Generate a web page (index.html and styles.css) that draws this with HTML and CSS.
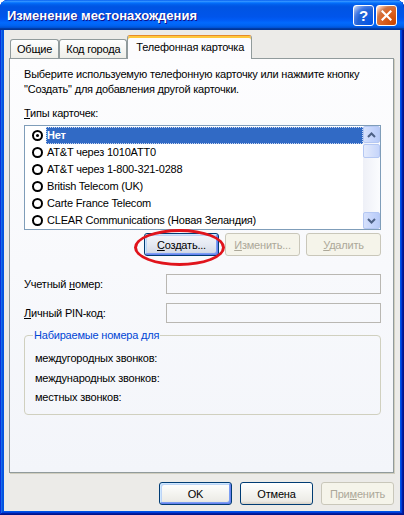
FILE: index.html
```html
<!DOCTYPE html>
<html lang="ru">
<head>
    <meta charset="UTF-8">
    <title>Изменение местонахождения</title>
    <link rel="stylesheet" href="styles.css">
</head>
<body>
    <div class="window">
        <div class="titlebar">
            <span class="title">Изменение местонахождения</span>
            <div class="controls">
                <button class="ctl help">?</button>
                <button class="ctl close">
                    <svg width="11" height="11" viewBox="0 0 11 11"><path d="M1.5 1.5 L9.5 9.5 M9.5 1.5 L1.5 9.5" stroke="#fff" stroke-width="2.2" stroke-linecap="square"/></svg>
                </button>
            </div>
        </div>

        <div class="frame">
            <div class="tabs">
                <div class="tab">Общие</div>
                <div class="tab">Код города</div>
                <div class="tab active">Телефонная карточка</div>
            </div>

            <div class="panel">
                <p class="intro">Выберите используемую телефонную карточку или нажмите кнопку "Создать" для добавления другой карточки.</p>
                <div class="caption"><u>Т</u>ипы карточек:</div>

                <div class="listbox">
                    <ul class="items">
                        <li class="item selected"><span class="radio on"></span><span class="name">Нет</span></li>
                        <li class="item"><span class="radio"></span><span class="name">AT&amp;T через 1010ATT0</span></li>
                        <li class="item"><span class="radio"></span><span class="name">AT&amp;T через 1-800-321-0288</span></li>
                        <li class="item"><span class="radio"></span><span class="name">British Telecom (UK)</span></li>
                        <li class="item"><span class="radio"></span><span class="name">Carte France Telecom</span></li>
                        <li class="item"><span class="radio"></span><span class="name">CLEAR Communications (Новая Зеландия)</span></li>
                    </ul>
                    <div class="scrollbar">
                        <div class="sb-btn">
                            <svg width="9" height="6" viewBox="0 0 9 6"><path d="M1 5 L4.5 1.5 L8 5" fill="none" stroke="#4D6185" stroke-width="2"/></svg>
                        </div>
                        <div class="sb-thumb"></div>
                        <div class="sb-track"></div>
                        <div class="sb-btn">
                            <svg width="9" height="6" viewBox="0 0 9 6"><path d="M1 1 L4.5 4.5 L8 1" fill="none" stroke="#4D6185" stroke-width="2"/></svg>
                        </div>
                    </div>
                </div>

                <div class="btn-row">
                    <button class="btn focus"><u>С</u>оздать...</button>
                    <button class="btn" disabled><u>И</u>зменить...</button>
                    <button class="btn" disabled><u>У</u>далить</button>
                </div>

                <div class="field first">
                    <label>Учетный <u>н</u>омер:</label>
                    <div class="edit"></div>
                </div>
                <div class="field">
                    <label><u>Л</u>ичный PIN-код:</label>
                    <div class="edit"></div>
                </div>

                <fieldset class="group">
                    <legend>Набираемые номера для</legend>
                    <div class="line">междугородных звонков:</div>
                    <div class="line">международных звонков:</div>
                    <div class="line">местных звонков:</div>
                </fieldset>
            </div>

            <div class="footer">
                <button class="btn small default">OK</button>
                <button class="btn small">Отмена</button>
                <button class="btn small" disabled>При<u>м</u>енить</button>
            </div>
        </div>

        <div class="mark"></div>
    </div>
</body>
</html>
```

FILE: styles.css
```css
body {
    margin: 0;
    font-family: "Liberation Sans", Arial, sans-serif;
    font-size: 11px;
    letter-spacing: -0.2px;
    color: #000;
    background: #fff;
}
.window {
    position: relative;
    width: 404px;
    height: 515px;
    display: flex;
    flex-direction: column;
    background: #0054e3;
    border-radius: 8px 8px 0 0;
    overflow: hidden;
    box-shadow: inset -1px -1px #00138c, inset 1px 1px #0831d9, inset -2px -2px #001ea0, inset 2px 2px #166aee, inset -3px -3px #003bda, inset 3px 3px #0855dd;
}
.titlebar {
    height: 30px;
    flex: none;
    display: flex;
    align-items: center;
    box-sizing: border-box;
    padding: 0 7px 0 7px;
    background: linear-gradient(180deg, #0058ee 0%, #3593ff 4%, #288eff 6%, #127dff 8%, #036ffc 10%, #0262ee 14%, #0057e5 20%, #0054e3 24%, #0055eb 56%, #005bf5 66%, #026afe 76%, #0062ef 86%, #0052d6 92%, #0040ab 94%, #003092 100%);
}
.title {
    flex: 1;
    color: #fff;
    font-weight: bold;
    font-size: 13px;
    letter-spacing: 0;
    text-shadow: 1px 1px #0f1089;
}
.controls {
    display: flex;
    gap: 2px;
}
.ctl {
    width: 21px;
    height: 21px;
    box-sizing: border-box;
    border: 1px solid #fff;
    border-radius: 3px;
    padding: 0;
    display: flex;
    align-items: center;
    justify-content: center;
    color: #fff;
    font-family: "Liberation Sans", Arial, sans-serif;
    font-weight: bold;
    font-size: 15px;
}
.help {
    background: radial-gradient(circle at 90% 90%, #0054e9 0%, #2263d5 55%, #4479e4 70%, #a3bbec 90%, #fff 100%);
}
.close {
    background: radial-gradient(circle at 90% 90%, #cc4600 0%, #dc6527 55%, #cd7546 70%, #ffccb2 90%, #fff 100%);
}

.frame {
    flex: 1;
    margin: 0 4px 4px;
    background: #ecebe8;
    display: flex;
    flex-direction: column;
}

/* tabs */
.tabs {
    display: flex;
    align-items: flex-end;
    height: 22px;
    margin: 6px 0 0 6px;
}
.tab {
    height: 19px;
    box-sizing: border-box;
    padding: 0 6px 1px 6px;
    border: 1px solid #919b9c;
    border-bottom: none;
    border-radius: 3px 3px 0 0;
    background: linear-gradient(180deg, #fff, #fafaf9 26%, #f0f0ea 95%, #ecebe6);
    display: flex;
    align-items: center;
}
.tab.active {
    position: relative;
    z-index: 1;
    height: 24px;
    margin-bottom: -1px;
    padding: 0 7px 2px 8px;
    background: #fcfcfe;
    border-top: 1px solid #e68b2c;
    box-shadow: inset 0 2px #ffc83c;
}

.panel {
    height: 415px;
    margin: 0 6px 0 5px;
    box-sizing: border-box;
    border: 1px solid #919b9c;
    background: linear-gradient(180deg, #fdfdfe, #f3f5fa);
    box-shadow: 1px 1px 0 #d0cebf;
    padding: 8px 12px 0 14px;
}
.intro {
    margin: 0;
    line-height: 15px;
}
.caption {
    margin-top: 9px;
    line-height: 14px;
}

/* list */
.listbox {
    margin-top: 5px;
    height: 105px;
    box-sizing: border-box;
    border: 1px solid #7f9db9;
    background: #fff;
    display: flex;
}
.items {
    flex: 1;
    list-style: none;
    margin: 0;
    padding: 1px 0 0;
    overflow: hidden;
}
.item {
    height: 17px;
    display: flex;
    align-items: center;
}
.radio {
    flex: none;
    width: 11px;
    height: 11px;
    box-sizing: border-box;
    border: 2px solid #000;
    border-radius: 50%;
    margin: 0 3px 0 7px;
    display: flex;
    align-items: center;
    justify-content: center;
}
.radio.on::after {
    content: "";
    width: 3px;
    height: 3px;
    border-radius: 50%;
    background: #000;
}
.name {
    flex: 1;
    height: 17px;
    line-height: 17px;
    padding-left: 1px;
    box-sizing: border-box;
}
.selected .name {
    background: #316ac5;
    color: #fff;
    font-weight: bold;
    outline: 1px dotted #c9d6ef;
    outline-offset: -1px;
}
.scrollbar {
    width: 17px;
    flex: none;
    display: flex;
    flex-direction: column;
    background: linear-gradient(90deg, #eef0f7, #fbfcfe);
}
.sb-btn,
.sb-thumb {
    box-sizing: border-box;
    border: 1px solid #b5c8f3;
    border-radius: 2px;
    background: linear-gradient(90deg, #d6e1fb, #c3d3fb 60%, #b8cbf7);
    display: flex;
    align-items: center;
    justify-content: center;
}
.sb-btn {
    height: 17px;
}
.sb-thumb {
    height: 14px;
    margin-top: 1px;
    background: linear-gradient(90deg, #e4ebfc, #d2defb 60%, #c6d5fa);
}
.sb-track {
    flex: 1;
}

/* buttons */
.btn {
    width: 75px;
    height: 23px;
    box-sizing: border-box;
    padding: 0;
    font-family: inherit;
    font-size: 11px;
    letter-spacing: -0.2px;
    color: #000;
    border: 1px solid #003c74;
    border-radius: 3px;
    background: linear-gradient(180deg, #fff, #f4f4f0 50%, #ecebe6 86%, #d6d0c5);
}
.btn:disabled {
    color: #aca899;
    border-color: #c9c7ba;
    background: #f5f4ea;
}
.btn.focus,
.btn.default {
    box-shadow: inset -1px -1px #6982ee, inset 1px 1px #cee7ff, inset -2px -2px #7b9ef4, inset 2px 2px #bcd4f6;
}
.btn.focus {
    background: linear-gradient(180deg, #f4f6fb, #e5e9f2 50%, #d6dbe7 86%, #b7bfd2);
}
.btn-row {
    margin-top: 3px;
    display: flex;
    justify-content: flex-end;
    gap: 6px;
}

/* fields */
.field {
    display: flex;
    align-items: center;
    margin-top: 9px;
}
.field.first {
    margin-top: 18px;
}
.field label {
    width: 142px;
    flex: none;
}
.edit {
    flex: 1;
    height: 20px;
    box-sizing: border-box;
    border: 1px solid #b9b7b2;
}

.group {
    margin: 5px 0 0;
    padding: 7px 10px 6px;
    border: 1px solid #d0d0bf;
    border-radius: 4px;
}
.group legend {
    color: #0046d5;
    padding: 0 1px;
    margin-left: -2px;
    line-height: 14px;
}
.line {
    line-height: 19.5px;
}

.footer {
    margin-top: 9px;
    padding-right: 6px;
    display: flex;
    justify-content: flex-end;
    gap: 8px;
}
.btn.small {
    width: 73px;
}

/* red annotation ellipse drawn over the dialog */
.mark {
    position: absolute;
    left: 134px;
    top: 229px;
    width: 91px;
    height: 37px;
    box-sizing: border-box;
    border: 3px solid #e0141c;
    border-radius: 50%;
    pointer-events: none;
}
```
